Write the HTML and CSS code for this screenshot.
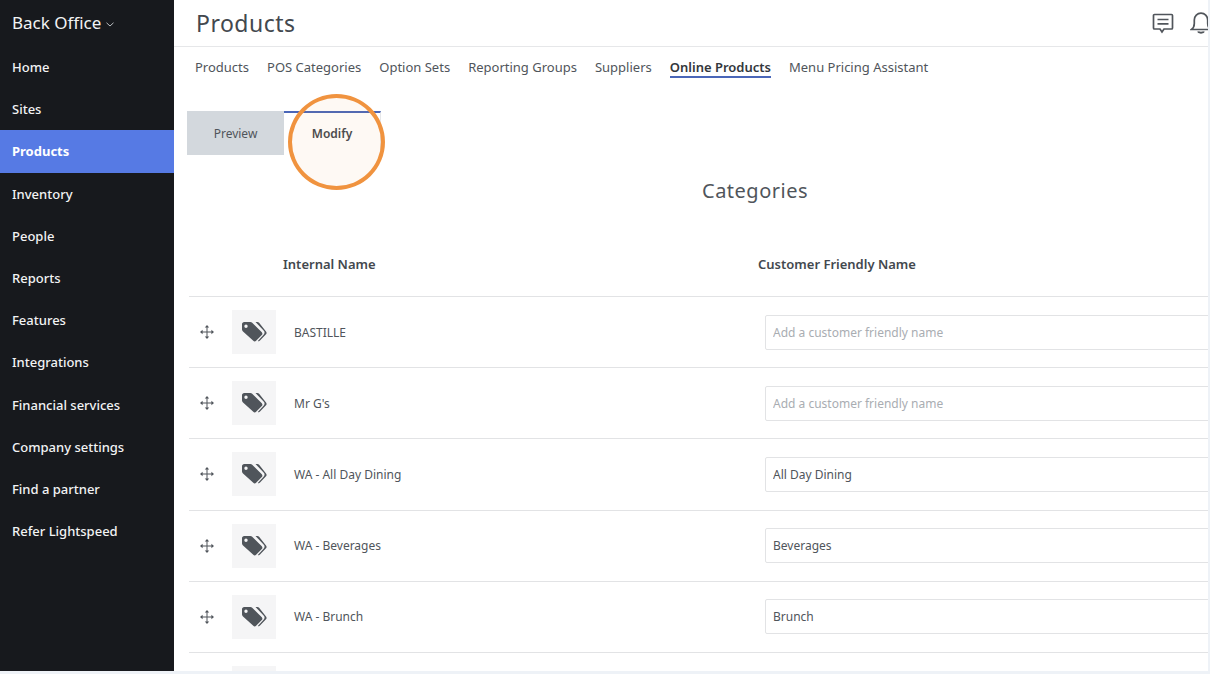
FILE: index.html
```html
<!DOCTYPE html>
<html lang="en">
<head>
    <meta charset="UTF-8">
    <title>Online Products</title>
    <link rel="stylesheet" href="styles.css">
</head>
<body>
    <svg class="icon-defs" width="0" height="0">
        <symbol id="tags" viewBox="0 0 26 22">
            <path d="M1 3.2C1 2 2 1 3.2 1h6.2c.7 0 1.3.3 1.8.8l9.6 9.5c.8.8.8 2 0 2.8l-5.7 5.7c-.8.8-2 .8-2.800 0L2 10.500c-.6-.6-1-1.300-1-2zM5 3.600a1.700 1.700 0 1 0 0 3.400 1.700 1.700 0 0 0 0-3.400z" fill-rule="evenodd"/>
            <path d="M14.500 1h1.800c.7 0 1.300.3 1.800.8l6.900 8.700c.8.800.8 2 0 2.800l-6 6.300c-.6.600-1.500.700-2.200.3l6-6.400c1-1 1-2.700 0-3.700z"/>
        </symbol>
        <symbol id="move" viewBox="0 0 14 14">
            <path d="M7 0l2.200 2.600H4.800zM7 14l-2.200-2.600h4.400zM0 7l2.600-2.200v4.400zM14 7l-2.600 2.200V4.800z"/>
            <path d="M6.500 2h1v10h-1zM2 6.500h10v1H2z"/>
        </symbol>
    </svg>

    <div class="app">
        <nav class="sidebar">
            <div class="brand">Back Office
                <svg class="caret" width="8" height="5" viewBox="0 0 8 5"><path d="M.5.800L4 4 7.500.800" fill="none" stroke="#b9bcc0"/></svg>
            </div>
            <a class="nav-item">Home</a>
            <a class="nav-item">Sites</a>
            <a class="nav-item active">Products</a>
            <a class="nav-item">Inventory</a>
            <a class="nav-item">People</a>
            <a class="nav-item">Reports</a>
            <a class="nav-item">Features</a>
            <a class="nav-item">Integrations</a>
            <a class="nav-item">Financial services</a>
            <a class="nav-item">Company settings</a>
            <a class="nav-item">Find a partner</a>
            <a class="nav-item">Refer Lightspeed</a>
        </nav>

        <main class="main">
            <header class="topbar">
                <h1>Products</h1>
                <div class="top-icons">
                    <svg width="22" height="22" viewBox="0 0 22 22" fill="none" stroke="#50555b" stroke-width="1.700">
                        <path d="M2.500 2.500h17c.6 0 1 .4 1 1v12.500c0 .6-.4 1-1 1h-7.500l-2 3-2-3H2.500c-.6 0-1-.4-1-1V3.500c0-.6.4-1 1-1z"/>
                        <path d="M5.500 7.500h11M5.500 11.800h11"/>
                    </svg>
                    <svg width="22" height="24" viewBox="0 0 22 24" fill="none" stroke="#50555b" stroke-width="1.700">
                        <path d="M1.500 18.500c2-1.500 2.800-3 2.800-6V9c0-4 3-6.800 6.700-6.800s6.700 2.800 6.700 6.800v3.500c0 3 .8 4.500 2.800 6z"/>
                        <path d="M8 20.500c.5 1.500 5.500 1.500 6 0" stroke-width="2"/>
                    </svg>
                </div>
            </header>

            <div class="subnav">
                <a>Products</a>
                <a>POS Categories</a>
                <a>Option Sets</a>
                <a>Reporting Groups</a>
                <a>Suppliers</a>
                <a class="current">Online Products</a>
                <a>Menu Pricing Assistant</a>
            </div>

            <div class="mode-tabs">
                <div class="mode-tab">Preview</div>
                <div class="mode-tab selected">Modify</div>
            </div>
            <div class="highlight-ring"></div>

            <h2 class="section-title">Categories</h2>

            <div class="table-head">
                <div class="col-internal">Internal Name</div>
                <div class="col-friendly">Customer Friendly Name</div>
            </div>

            <div class="row">
                <svg class="move"><use href="#move"/></svg>
                <div class="tag-box"><svg class="tag"><use href="#tags"/></svg></div>
                <div class="row-name">BASTILLE</div>
                <input class="friendly-input" placeholder="Add a customer friendly name">
            </div>
            <div class="row">
                <svg class="move"><use href="#move"/></svg>
                <div class="tag-box"><svg class="tag"><use href="#tags"/></svg></div>
                <div class="row-name">Mr G's</div>
                <input class="friendly-input" placeholder="Add a customer friendly name">
            </div>
            <div class="row">
                <svg class="move"><use href="#move"/></svg>
                <div class="tag-box"><svg class="tag"><use href="#tags"/></svg></div>
                <div class="row-name">WA - All Day Dining</div>
                <input class="friendly-input" value="All Day Dining">
            </div>
            <div class="row">
                <svg class="move"><use href="#move"/></svg>
                <div class="tag-box"><svg class="tag"><use href="#tags"/></svg></div>
                <div class="row-name">WA - Beverages</div>
                <input class="friendly-input" value="Beverages">
            </div>
            <div class="row">
                <svg class="move"><use href="#move"/></svg>
                <div class="tag-box"><svg class="tag"><use href="#tags"/></svg></div>
                <div class="row-name">WA - Brunch</div>
                <input class="friendly-input" value="Brunch">
            </div>
            <div class="row">
                <svg class="move"></svg>
                <div class="tag-box"></div>
                <div class="row-name"></div>
                <input class="friendly-input">
            </div>
        </main>
    </div>
</body>
</html>
```

FILE: styles.css
```css
* {
    box-sizing: border-box;
}
html, body {
    margin: 0;
    height: 100%;
    overflow: hidden;
}
body {
    background: #eef2f7;
    font-family: "Noto Sans", Arial, sans-serif;
    color: #50555b;
}
.icon-defs {
    position: absolute;
}
.app {
    display: flex;
    width: 1208px;
    height: 671px;
}

/* sidebar */
.sidebar {
    width: 174px;
    flex: none;
    background: #17191d;
    color: #f2f3f4;
}
.brand {
    height: 46px;
    padding-left: 12px;
    display: flex;
    align-items: center;
    font-size: 17px;
    line-height: 46px;
}
.caret {
    margin: 3px 0 0 5px;
}
.nav-item {
    display: block;
    height: 42.2px;
    line-height: 42px;
    padding-left: 12px;
    font-size: 13px;
    font-weight: 500;
}
.nav-item.active {
    background: #567ae4;
    color: #fff;
    font-weight: 700;
}

/* main */
.main {
    position: relative;
    flex: 1;
    background: #fff;
    overflow: hidden;
}
.topbar {
    height: 47px;
    padding-left: 22px;
    display: flex;
    align-items: center;
    justify-content: space-between;
    border-bottom: 1px solid #e6e7e9;
}
.topbar h1 {
    margin: 0;
    font-size: 23px;
    font-weight: 400;
    letter-spacing: .5px;
    color: #43484e;
}
.top-icons {
    display: flex;
    gap: 16px;
    margin-right: -4px;
    align-items: center;
}
.subnav {
    display: flex;
    gap: 18px;
    padding-left: 21px;
    height: 37px;
    align-items: flex-start;
    font-size: 13px;
}
.subnav a {
    height: 30px;
    padding-top: 11px;
    line-height: 18px;
    white-space: nowrap;
}
.subnav a.current {
    color: #33373c;
    font-weight: 600;
    border-bottom: 2px solid #4a66b8;
    height: 31px;
    padding-bottom: 0;
}
.mode-tabs {
    display: flex;
    margin: 27px 0 0 13px;
}
.mode-tab {
    width: 97px;
    height: 44px;
    line-height: 46px;
    text-align: center;
    font-size: 12px;
    background: #d3d8dd;
}
.mode-tab.selected {
    background: #fff;
    border-top: 2px solid #4a66b8;
    border-right: 1px solid #e6e7e9;
    line-height: 42px;
    font-weight: 600;
    color: #43484e;
}
.highlight-ring {
    position: absolute;
    left: 114px;
    top: 94px;
    width: 97px;
    height: 96px;
    border: 4px solid #f0933f;
    border-radius: 50%;
    background: rgba(240, 147, 63, .06);
}
.section-title {
    margin: 21px 0 0;
    padding-left: 528px;
    width: 1034px;
    line-height: 30px;
    font-size: 20px;
    font-weight: 400;
    letter-spacing: .5px;
    color: #50555b;
    white-space: nowrap;
}
.table-head {
    display: flex;
    height: 91px;
    margin-left: 15px;
    padding-top: 48px;
    font-size: 13px;
    font-weight: 600;
    color: #43484e;
    border-bottom: 1px solid #e2e3e5;
    line-height: 20px;
}
.col-internal {
    margin-left: 94px;
    width: 475px;
}
.row {
    display: flex;
    align-items: center;
    height: 71.2px;
    margin-left: 15px;
    border-bottom: 1px solid #e2e3e5;
}
.move {
    width: 14px;
    height: 14px;
    margin-left: 11px;
    fill: #50555b;
}
.tag-box {
    width: 44px;
    height: 44px;
    margin-left: 18px;
    background: #f5f5f6;
    display: flex;
    align-items: center;
    justify-content: center;
}
.tag {
    width: 26px;
    height: 22px;
    fill: #50555b;
}
.row-name {
    width: 471px;
    margin-left: 18px;
    font-size: 12px;
}
.friendly-input {
    flex: 1;
    min-width: 0;
    height: 35px;
    margin-right: -3px;
    padding: 0 7px;
    border: 1px solid #e2e3e5;
    border-radius: 2px;
    font-family: inherit;
    font-size: 12px;
    color: #50555b;
    outline: none;
}
.friendly-input::placeholder {
    color: #a9adb2;
}
```
